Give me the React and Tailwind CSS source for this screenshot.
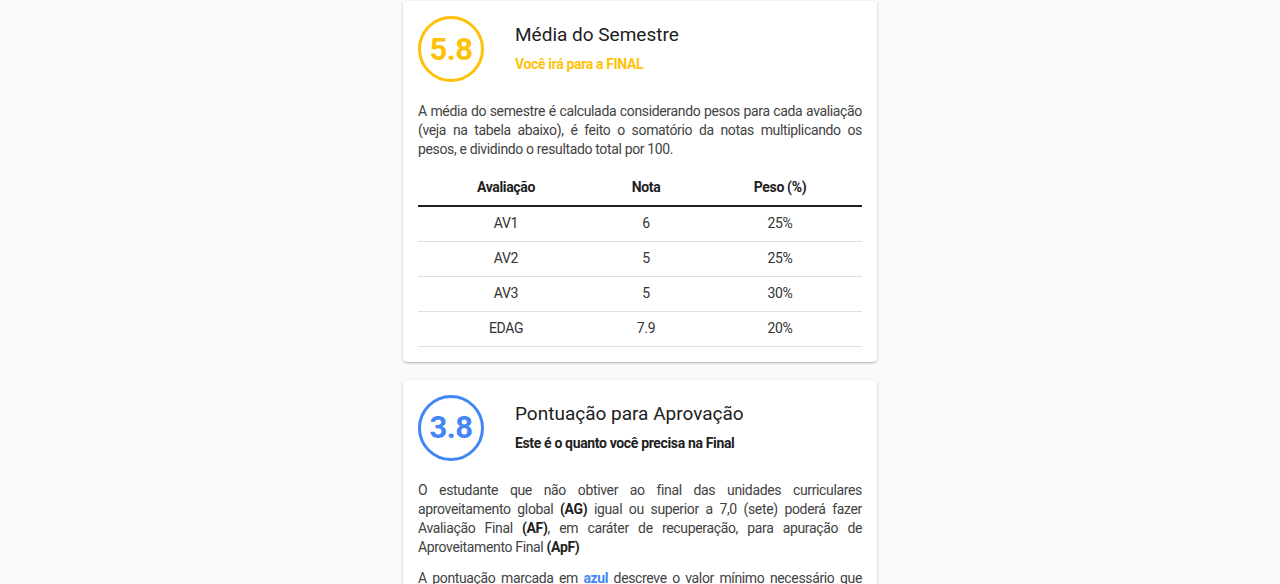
import React from 'react';

const rows = [
  { av: 'AV1', nota: '6', peso: '25%' },
  { av: 'AV2', nota: '5', peso: '25%' },
  { av: 'AV3', nota: '5', peso: '30%' },
  { av: 'EDAG', nota: '7.9', peso: '20%' },
];

const Score = ({ value, color }) => (
  <div className={`w-[66px] h-[66px] shrink-0 rounded-full border-[3px] flex items-center justify-center ${color}`}>
    <span className="text-[31px] font-bold leading-none tracking-[-0.5px]">{value}</span>
  </div>
);

const App = () => {
  return (
    <div className="min-h-screen bg-[#fafafa] font-['Roboto',sans-serif] text-[#212121]">
      <div className="w-[474px] mx-auto pt-[1px] flex flex-col gap-[18px]">
        <div className="bg-white rounded-[4px] shadow-[0_1px_3px_rgba(0,0,0,0.2),0_1px_1px_rgba(0,0,0,0.12)] p-[15px]">
          <div className="flex items-start">
            <Score value="5.8" color="border-[#ffc107] text-[#ffc107]" />
            <div className="ml-[31px] pt-[7px]">
              <h2 className="text-[19px] leading-[24px] text-[#212121]">Média do Semestre</h2>
              <p className="mt-[8px] text-[14px] font-bold tracking-[-0.35px] text-[#ffc107] leading-[18px]">Você irá para a FINAL</p>
            </div>
          </div>
          <p className="mt-[20px] text-[14px] leading-[19px] tracking-[-0.35px] text-[#424242] text-justify">
            A média do semestre é calculada considerando pesos para cada avaliação (veja na tabela abaixo), é feito o somatório da notas multiplicando os pesos, e dividindo o resultado total por 100.
          </p>
          <table className="mt-[10px] w-full text-[14px] tracking-[-0.35px] text-[#333] border-collapse">
            <thead>
              <tr className="border-b-2 border-[#212121]">
                <th className="w-[176px] h-[37px] font-bold text-[14px] text-[#212121]">Avaliação</th>
                <th className="w-[104px] font-bold text-[14px] text-[#212121]">Nota</th>
                <th className="font-bold text-[14px] text-[#212121]">Peso (%)</th>
              </tr>
            </thead>
            <tbody>
              {rows.map((r) => (
                <tr key={r.av} className="border-b border-[#e0e0e0]">
                  <td className="h-[35px] text-center">{r.av}</td>
                  <td className="text-center">{r.nota}</td>
                  <td className="text-center">{r.peso}</td>
                </tr>
              ))}
            </tbody>
          </table>
        </div>

        <div className="bg-white rounded-[4px] shadow-[0_1px_3px_rgba(0,0,0,0.2),0_1px_1px_rgba(0,0,0,0.12)] p-[15px]">
          <div className="flex items-start">
            <Score value="3.8" color="border-[#4285f4] text-[#4285f4]" />
            <div className="ml-[31px] pt-[7px]">
              <h2 className="text-[19px] leading-[24px] text-[#212121]">Pontuação para Aprovação</h2>
              <p className="mt-[8px] text-[14px] font-bold tracking-[-0.35px] text-[#212121] leading-[18px]">Este é o quanto você precisa na Final</p>
            </div>
          </div>
          <p className="mt-[20px] text-[14px] leading-[19px] tracking-[-0.35px] text-[#424242] text-justify">
            O estudante que não obtiver ao final das unidades curriculares aproveitamento global <b className="text-[#212121]">(AG)</b> igual ou superior a 7,0 (sete) poderá fazer Avaliação Final <b className="text-[#212121]">(AF)</b>, em caráter de recuperação, para apuração de Aproveitamento Final <b className="text-[#212121]">(ApF)</b>
          </p>
          <p className="mt-[12px] text-[14px] leading-[19px] tracking-[-0.35px] text-[#424242] text-justify">
            A pontuação marcada em <b className="text-[#4285f4]">azul</b> descreve o valor mínimo necessário que você precisa obter na Avaliação Final para ser aprovado na disciplina.
          </p>
        </div>
      </div>
    </div>
  );
};

export default App;
